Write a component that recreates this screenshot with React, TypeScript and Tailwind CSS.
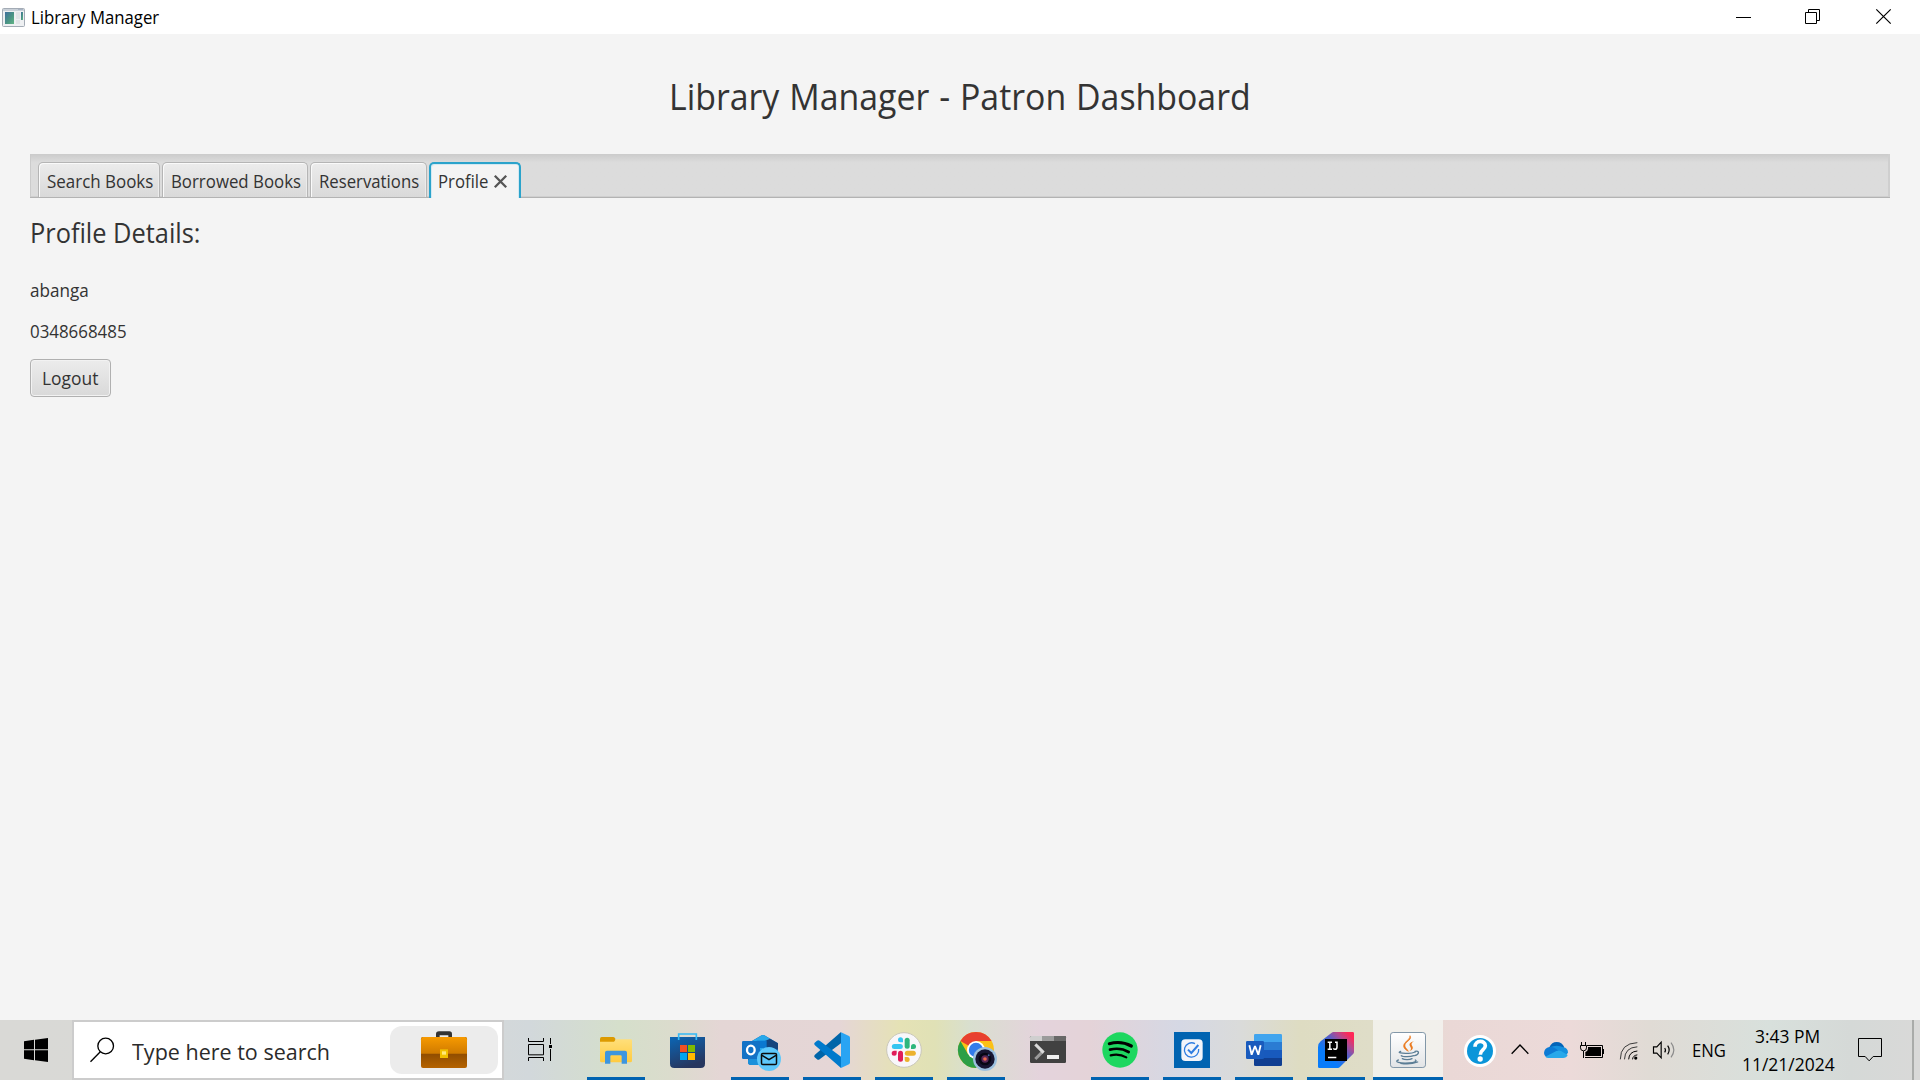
import type { ReactNode } from "react";

function Icon({ box, children, className = "size-9" }: { box: string; children: ReactNode; className?: string }) {
  return (
    <svg viewBox={box} className={`${className} shrink-0 overflow-visible`} fill="none">
      {children}
    </svg>
  );
}

function Label({ children, className }: { children: ReactNode; className: string }) {
  return <span className={`block origin-left whitespace-nowrap ${className}`}>{children}</span>;
}

function TitleBar() {
  return (
    <header className="flex h-[34px] shrink-0 items-center bg-white">
      <Icon box="6 21 69 57" className="ml-[2px] h-[19px] w-[23px]">
        <rect x="7.5" y="22.5" width="66" height="54" rx="3" fill="#eef0f2" stroke="#a3abb5" strokeWidth="3" />
        <path d="M9 24h63v6H9z" fill="#c9d0d8" />
        <path d="M54 24h15v3H54z" fill="#a9b4c4" />
        <rect x="15" y="33" width="27" height="36" fill="url(#appPane)" />
        <path d="M48 33h12v21H48zM48 57h12v12H48z" fill="#e1e4e7" />
        <rect x="63" y="33" width="6" height="24" fill="url(#appPane)" />
        <defs>
          <linearGradient id="appPane" x1="0" y1="0" x2="1" y2="1">
            <stop stopColor="#3f6f9e" />
            <stop offset=".55" stopColor="#4a9484" />
            <stop offset="1" stopColor="#62b585" />
          </linearGradient>
        </defs>
      </Icon>
      <Label className="ml-[6px] scale-x-[.93] text-[18px] leading-[34px] text-black">Library Manager</Label>
      <div className="ml-auto flex h-full">
        <div className="flex w-[69px] items-center justify-center">
          <Icon box="0 0 15 15" className="mb-px size-[15px]">
            <path d="M0 8h15" stroke="#000" shapeRendering="crispEdges" />
          </Icon>
        </div>
        <div className="flex w-[69px] items-center justify-center">
          <Icon box="0 0 15 15" className="mb-px size-[15px]">
            <path d="M.5 3.5h11v11H.5zM3.5 3.5v-3h11v11h-3" stroke="#000" />
          </Icon>
        </div>
        <div className="flex w-[73px] items-center justify-center">
          <Icon box="0 0 15 15" className="mb-px size-[15px]">
            <path d="M.3.3l14.4 14.4M14.7.3L.3 14.7" stroke="#000" strokeWidth="1.2" />
          </Icon>
        </div>
      </div>
    </header>
  );
}

function Tab({ className, scale, children }: { className: string; scale: string; children: ReactNode }) {
  return (
    <div
      className={`h-[35px] rounded-t-[5px] border border-b-0 border-[#b5b5b5] bg-linear-to-b from-[#ececec] to-[#d9d9d9] pl-2 shadow-[inset_1px_1px_0_#fafafa,inset_-1px_0_0_#ececec] ${className}`}
    >
      <Label className={`text-[18px] leading-[37px] ${scale}`}>{children}</Label>
    </div>
  );
}

function TabBar() {
  return (
    <nav className="mx-[30px] flex h-11 items-end gap-[2px] border-b border-[#b3b3b3] bg-[#dcdcdc] bg-linear-to-b from-[#cbcbcb] to-[#dcdcdc] to-20% pl-2 shadow-[inset_1px_0_0_#cbcbcb,inset_-2px_0_0_#cfcfcf,inset_0_-1px_0_#cfcfcf]">
      <Tab className="w-[122px]" scale="scale-x-[.941]">Search Books</Tab>
      <Tab className="w-[146px]" scale="scale-x-[.935]">Borrowed Books</Tab>
      <Tab className="w-[117px]" scale="scale-x-[.93]">Reservations</Tab>
      <div className="-mb-px flex h-9 w-[92px] rounded-t-[5px] border-2 border-b-0 border-[#2ba3cb] bg-[#f4f4f4] pl-[7px] shadow-[inset_1px_1px_0_#d3e9f2,inset_-1px_0_0_#d3e9f2]">
        <Label className="w-[56px] scale-x-[.93] text-[18px] leading-[35px]">Profile</Label>
        <Icon box="0 0 13 13" className="mt-[11px] size-[13px]">
          <path d="M.8.8l11.4 11.4M12.2.8L.8 12.2" stroke="#555" strokeWidth="2.3" />
        </Icon>
      </div>
    </nav>
  );
}

function TaskButton({ children, running = true, active = false }: { children: ReactNode; running?: boolean; active?: boolean }) {
  return (
    <div className={`flex h-full w-[72px] shrink-0 flex-col items-center px-px ${active ? "bg-clip-content bg-[#f3f3f0]/85" : ""}`}>
      <div className="flex h-[57px] items-center pt-[3px]">{children}</div>
      {running && <div className={`h-[3px] bg-[#0063b1] ${active ? "w-full" : "w-[58px]"}`} />}
    </div>
  );
}

function SearchBox() {
  return (
    <div className="flex h-full w-[432px] shrink-0 items-center border-2 border-[#cccccc] bg-white">
      <Icon box="270 84 72 72" className="ml-4 size-6">
        <circle cx="317" cy="108" r="23.5" stroke="#000" strokeWidth="4" />
        <path d="M301 125l-29.500 30" stroke="#000" strokeWidth="4" />
      </Icon>
      <Label className="ml-[18px] scale-x-[.978] pt-[2px] text-[22px] leading-[56px] text-[#2b2b2b]">Type here to search</Label>
      <div className="mr-1 ml-auto flex h-12 w-[108px] items-center justify-center rounded-xl bg-[#ececec]">
        <Icon box="303 63 138 111" className="mb-px h-[37px] w-[46px]">
          <path d="M348 82V72q0-8 9-8h31q8 0 8 8v10h-11v-6h-26v6z" fill="#333" />
          <rect x="303" y="81" width="138" height="93" rx="6" fill="url(#caseLow)" />
          <path d="M303 131V88q0-7 7-7h124q7 0 7 7v43z" fill="url(#caseTop)" />
          <rect x="360" y="118" width="24" height="26" fill="#f2c100" />
          <rect x="366" y="124" width="12" height="10" fill="#ffe97a" />
          <defs>
            <linearGradient id="caseTop" x1="0" y1="0" x2="0" y2="1">
              <stop stopColor="#f79a00" />
              <stop offset="1" stopColor="#cf7a00" />
            </linearGradient>
            <linearGradient id="caseLow" x1="0" y1=".5" x2="0" y2="1">
              <stop stopColor="#8d4b00" />
              <stop offset="1" stopColor="#b56300" />
            </linearGradient>
          </defs>
        </Icon>
      </div>
    </div>
  );
}

function Apps() {
  return (
    <div className="flex h-full">
      <TaskButton>
        <Icon box="834 66 108 108">
          <path d="M840 86q0-5 5-5h35q4 0 6 5v14h-46z" fill="#dc9a00" />
          <path d="M840 95h42l6-7h44q4 0 4 4v60q0 5-5 5h-86q-5 0-5-5z" fill="url(#folder)" />
          <path d="M855 161v-33q0-6 6-6h54q6 0 6 6v33h-16v-22q0-3-3-3h-28q-3 0-3 3v22z" fill="#3d96df" />
          <defs>
            <linearGradient id="folder" x1="0" y1="0" x2="0" y2="1">
              <stop stopColor="#ffdf7a" />
              <stop offset="1" stopColor="#ffcb40" />
            </linearGradient>
          </defs>
        </Icon>
      </TaskButton>
      <TaskButton running={false}>
        <Icon box="90 66 108 108">
          <path d="M90 81h105v80q0 13-13 13h-79q-13 0-13-13z" fill="url(#bag)" />
          <path d="M116 90V72h53v18" stroke="#35b9f5" strokeWidth="5" />
          <path d="M120 105h21v21h-21z" fill="#f25022" />
          <path d="M144 105h21v21h-21z" fill="#7fba00" />
          <path d="M120 129h21v21h-21z" fill="#00a4ef" />
          <path d="M144 129h21v21h-21z" fill="#ffb900" />
          <defs>
            <linearGradient id="bag" x1="0" y1="0" x2=".4" y2="1">
              <stop stopColor="#0b66b5" />
              <stop offset="1" stopColor="#26365f" />
            </linearGradient>
          </defs>
        </Icon>
      </TaskButton>
      <TaskButton>
        <Icon box="306 66 108 108">
          <path d="M324 100l41-24q4-2 8 0l41 24v56q0 9-9 9h-72q-9 0-9-9z" fill="#1066b5" />
          <path d="M328 98l37-22q4-2 8 0l26 16-36 30z" fill="#28a8ea" />
          <path d="M368 96l22-10 24 14v16l-22 14z" fill="#14447d" />
          <path d="M350 92h30v22h-30z" fill="#0a78d0" />
          <path d="M324 150l60-34 20 49h-71q-9 0-9-9z" fill="#1a91db" />
          <rect x="306" y="93" width="54" height="54" rx="4" fill="#1272c6" />
          <ellipse cx="332.500" cy="120" rx="11.500" ry="13" stroke="#fff" strokeWidth="7" />
          <circle cx="387" cy="147" r="36" fill="#5ec8fb" />
          <rect x="364.500" y="130.500" width="45" height="33" rx="4" stroke="#0b0b0b" strokeWidth="4.500" />
          <path d="M366 136l21 13 21-13" stroke="#0b0b0b" strokeWidth="4.500" />
        </Icon>
      </TaskButton>
      <TaskButton>
        <Icon box="522 66 108 108">
          <path d="M603 66L524 135q-3 4 0 7l7 6q4 3 8 0l64-48z" fill="#0065a9" />
          <path d="M603 174L524 105q-3-4 0-7l7-6q4-3 8 0l64 48z" fill="#007acc" />
          <path d="M603 67l24 11q3 2 3 6v73q0 4-3 6l-24 11z" fill="#29a4f3" />
        </Icon>
      </TaskButton>
      <TaskButton>
        <Icon box="738 66 108 108">
          <circle cx="792" cy="120" r="52" fill="#f8f7fa" stroke="#cac7ba" strokeWidth="3" />
          <g strokeWidth="15" strokeLinecap="round">
            <path d="M763 109.500h18" stroke="#36c5f0" />
            <path d="M801.500 91v18" stroke="#2eb67d" />
            <path d="M802 129.500h18" stroke="#ecb22e" />
            <path d="M781.500 130v18" stroke="#e01e5a" />
          </g>
          <path d="M789 97h-7.500a7.500 7.500 0 1 1 7.500-7.500z" fill="#36c5f0" />
          <path d="M813 117v-7.500a7.500 7.500 0 1 1 7.500 7.500z" fill="#2eb67d" />
          <path d="M794 141h7.500a7.500 7.500 0 1 1-7.500 7.500z" fill="#ecb22e" />
          <path d="M770 122v7.500a7.500 7.500 0 1 1-7.500-7.500z" fill="#e01e5a" />
        </Icon>
      </TaskButton>
      <TaskButton>
        <Icon box="-6 66 108 108">
          <circle cx="48" cy="120" r="54" fill="#fbc116" />
          <path d="M48 120L1.200 93A54 54 0 0 1 94.800 93H48z" fill="#e8402f" />
          <path d="M1.200 93A54 54 0 0 0 48 174L71.400 133.500 48 120 24.600 133.500z" fill="#2c9f47" />
          <circle cx="48" cy="120" r="27" fill="#fff" />
          <circle cx="48" cy="120" r="21.500" fill="#327ceb" />
          <circle cx="75" cy="147" r="36" fill="#9cc0de" />
          <circle cx="75" cy="147" r="29" fill="#171632" />
          <circle cx="75" cy="147" r="19" fill="#070714" />
          <circle cx="75" cy="147" r="11" fill="#5a2857" />
          <circle cx="75" cy="147" r="5.500" fill="#ef6a4b" />
          <circle cx="86" cy="136" r="3" fill="#4667a8" />
        </Icon>
      </TaskButton>
      <TaskButton running={false}>
        <Icon box="210 66 108 108">
          <rect x="210" y="78" width="108" height="81" rx="4" fill="#414141" />
          <path d="M210 93V82q0-4 4-4h32v15z" fill="#cfcfcf" />
          <path d="M246 78h36v15h-36z" fill="#9b9b9b" />
          <path d="M282 78h32q4 0 4 4v11h-36z" fill="#686868" />
          <path d="M226 147l22-22" stroke="#999" strokeWidth="9" />
          <path d="M226 103l25 25" stroke="#d9d9d9" strokeWidth="9" />
          <path d="M261 135h36v12h-36z" fill="#efefef" />
        </Icon>
      </TaskButton>
      <TaskButton>
        <Icon box="426 66 108 108">
          <circle cx="480" cy="120" r="53" fill="#1ed760" />
          <g stroke="#000" strokeLinecap="round">
            <path d="M448 101c22-6 46-4 66 7" strokeWidth="9.500" />
            <path d="M450 119c20-5 39-3 56 7" strokeWidth="8" />
            <path d="M452 136c17-4 33-2 47 6" strokeWidth="6.500" />
          </g>
        </Icon>
      </TaskButton>
      <TaskButton>
        <Icon box="642 66 108 108">
          <path d="M642 66h108v108H642z" fill="#0063b1" />
          <rect x="664" y="88" width="64" height="65" rx="12" fill="#f2f5fa" />
          <path d="M716 117a21.500 21.500 0 1 1-11-16" stroke="#2f7de1" strokeWidth="4" />
          <path d="M684 119l10 10 21-24" stroke="#2f7de1" strokeWidth="6" />
        </Icon>
      </TaskButton>
      <TaskButton>
        <Icon box="858 66 108 108">
          <path d="M882 96V76q0-4 4-4h76q4 0 4 4v20z" fill="#41a5ee" />
          <path d="M882 96h84v24h-84z" fill="#2b7cd3" />
          <path d="M882 120h84v24h-84z" fill="#185abd" />
          <path d="M882 144h84v20q0 4-4 4h-76q-4 0-4-4z" fill="#103f91" />
          <rect x="858" y="93" width="54" height="54" rx="4" fill="#195bbd" />
          <path d="M868 106l7 28 10-26 10 26 7-28" stroke="#fff" strokeWidth="5.500" strokeLinejoin="bevel" />
        </Icon>
      </TaskButton>
      <TaskButton>
        <Icon box="114 66 108 108">
          <path d="M155 68q2-2 5-2h58q4 0 4 4v56q0 3-2 5l-41 41q-2 2-5 2h-56q-4 0-4-4v-58q0-12 8-18z" fill="url(#ij)" />
          <path d="M135 87h66v66h-66z" fill="#000" />
          <path d="M143 97h13M149.500 97v21M143 118h13M165 97h6v14q0 7-6 7-3 0-5-3" stroke="#fff" strokeWidth="4.500" />
          <path d="M144 142.500h25" stroke="#fff" strokeWidth="4.500" />
          <defs>
            <linearGradient id="ij" x1="114" y1="174" x2="222" y2="66" gradientUnits="userSpaceOnUse">
              <stop offset=".3" stopColor="#087cfa" />
              <stop offset=".58" stopColor="#5560c8" />
              <stop offset=".75" stopColor="#b6488e" />
              <stop offset=".9" stopColor="#fe2857" />
            </linearGradient>
          </defs>
        </Icon>
      </TaskButton>
      <TaskButton active>
        <Icon box="330 66 108 108">
          <rect x="331.500" y="67.500" width="105" height="105" rx="8" fill="url(#java)" stroke="#8297a8" strokeWidth="3" />
          <path d="M390 77c9 13-19 19-15 32 1 5 8 10 10 15-14-8-18-16-10-26 7-8 15-11 15-21z" fill="#ea7a20" stroke="#ea7a20" strokeWidth="2" />
          <path d="M402 93c-14 5-16 10-11 17 4 6 2 10-4 14 12-5 14-10 9-17-3-5-1-9 6-14z" fill="#ea7a20" />
          <g stroke="#5b7d95" strokeWidth="4" strokeLinecap="round">
            <path d="M362 124c-12 4 2 7 24 6 8 0 15-2 20-4M364 137c5 4 28 4 37 0M367 146c6 4 22 4 29 0M355 150c-14 5 4 11 32 9 16-1 26-5 19-9M362 160c16 3 38 1 51-4" />
            <path d="M405 124c14-4 14 9-1 13" />
          </g>
          <defs>
            <linearGradient id="java" x1="0" y1="0" x2="0" y2="1">
              <stop stopColor="#fff" />
              <stop offset="1" stopColor="#e2e4e6" />
            </linearGradient>
          </defs>
        </Icon>
      </TaskButton>
    </div>
  );
}

function Tray() {
  return (
    <div className="ml-auto flex h-full items-center text-black">
      <Icon box="551 75 96 96" className="mt-[2px] size-8">
        <circle cx="599" cy="123" r="48" fill="#fff" />
        <circle cx="599" cy="123" r="39" fill="#0b95d9" />
        <path d="M584 110c0-21 31-20 31-3 0 12-15 12-15 27" stroke="#fff" strokeWidth="11" />
        <circle cx="599.500" cy="147" r="8" fill="#fff" />
      </Icon>
      <Icon box="693 102 54 30" className="mb-[2px] ml-[15px] h-[10px] w-[18px]">
        <path d="M695 131l25-26 25 26" stroke="#000" strokeWidth="4" />
      </Icon>
      <Icon box="792 96 72 48" className="ml-[15px] h-4 w-6">
        <path d="M808 112q7-16 22-16 16 0 23 16l-20 20z" fill="#0364b8" />
        <path d="M850 112q14 2 14 16l-8 10-48-26q24-10 42 0z" fill="#1490df" />
        <path d="M808 111q9-2 17 4l14 9-40 18q-7-5-7-13 1-15 16-18z" fill="#0d7ad4" />
        <path d="M796 140l33-17q8-3 14 0l20 12q-3 9-14 9h-44q-5 0-9-4z" fill="#28a8ea" />
      </Icon>
      <Icon box="60 93 72 48" className="ml-[12px] h-4 w-6">
        <path d="M81 103.500h46.500v36H75" stroke="#000" strokeWidth="3" />
        <path d="M84 108h39v27H76v-12q7-2 8-9z" fill="#000" />
        <path d="M129 114h3v15h-3z" fill="#000" />
        <path d="M64.500 93v9M76.500 93v9M61.500 103.500h18v7q0 9-9 9t-9-9zM70.500 120v21" stroke="#000" strokeWidth="3" />
      </Icon>
      <Icon box="180 96 56 54" className="mt-[2px] ml-[16px] h-[18px] w-[18px]">
        <path d="M181 149q0-50 53-52M194 149q1-37 40-39" stroke="#333" strokeWidth="3" />
        <path d="M207 149q1-24 27-26M219 149q1-12 15-14" stroke="#000" strokeWidth="3" />
        <circle cx="229" cy="145" r="5" fill="#000" />
      </Icon>
      <Icon box="279 93 66 54" className="ml-[15px] h-[18px] w-[22px]">
        <path d="M280.500 110.500h10l13-14v47l-13-14h-10z" stroke="#000" strokeWidth="3.500" />
        <path d="M314 114q5 6 0 13M323 107q9 13 0 26" stroke="#000" strokeWidth="3.500" />
        <path d="M333 98q17 22 0 44" stroke="#8b8b8b" strokeWidth="3.500" />
      </Icon>
      <Label className="ml-[17px] w-[34px] scale-x-[.925] text-[18px] leading-[60px]">ENG</Label>
      <div className="ml-[16px] flex h-full w-[93px] flex-col items-start pt-[2px]">
        <Label className="ml-[13px] scale-x-[.967] text-[18px] leading-7">3:43 PM</Label>
        <Label className="scale-x-[.97] text-[18px] leading-7">11/21/2024</Label>
      </div>
      <Icon box="894 84 72 72" className="ml-[23px] size-6">
        <path d="M895.500 85.500h69v54h-25l-12 13-12-13h-20z" stroke="#000" strokeWidth="3" />
      </Icon>
      <div className="ml-[30px] h-full w-2 border-l-2 border-[#a9aba9]" />
    </div>
  );
}

function Taskbar() {
  return (
    <footer className="flex h-[60px] shrink-0 bg-[linear-gradient(90deg,#d9d9d6_0px,#d8d9d6_400px,#d2d8db_530px,#d5dfcb_620px,#dbdccd_670px,#e4d6d5_720px,#e5d6d6_840px,#e5e2b5_900px,#e0e1b6_935px,#d9dfcf_970px,#e4d3dc_1040px,#e4d3d8_1090px,#d5d8e4_1180px,#dadbda_1240px,#dedcc2_1300px,#dfddc8_1370px,#ead8d6_1450px,#ecdad9_1570px,#e0dbd5_1650px,#d8e0dc_1770px,#d5d9d7_1850px,#d9d9d8_1920px)]">
      <div className="flex w-[72px] shrink-0 items-center justify-center">
        <Icon box="72 84 72 72" className="size-6">
          <path d="M72 94l30-4.500V118H72zM105 89l39-5v34h-39zM72 121h30v29.500L72 146zM105 121h39v35l-39-5z" fill="#000" />
        </Icon>
      </div>
      <SearchBox />
      <div className="mr-1 flex w-[72px] shrink-0 items-center justify-center">
        <Icon box="624 84 72 69" className="mb-px h-[23px] w-6">
          <path
            d="M625.500 84v10.500h45V84M625.500 103.500h45v31h-45zM625.500 153v-10.500h45V153M691.500 84v18M691.500 117v36"
            stroke="#000"
            strokeWidth="3"
          />
          <path d="M687 105h9v9h-9z" fill="#000" />
        </Icon>
      </div>
      <Apps />
      <Tray />
    </footer>
  );
}

export default function App() {
  return (
    <div className="flex h-screen w-full flex-col overflow-hidden bg-[#f4f4f4] font-['Open_Sans','Noto_Sans',sans-serif] text-[#333333]">
      <TitleBar />
      <main className="flex min-h-0 flex-1 flex-col">
        <div className="flex h-[120px] shrink-0 pt-[3px] pl-[669px]">
          <Label className="scale-x-[.94] text-[36px] leading-[120px] [word-spacing:1.2px]">Library Manager - Patron Dashboard</Label>
        </div>
        <TabBar />
        <section className="flex flex-col items-start px-[30px] pt-[17px]">
          <Label className="scale-x-[.94] text-[27px] leading-9">Profile Details:</Label>
          <Label className="mt-[27px] scale-x-[.95] text-[18px] leading-6">abanga</Label>
          <Label className="mt-[17px] scale-x-[.938] text-[18px] leading-6">0348668485</Label>
          <button className="mt-[16px] h-[38px] w-[81px] rounded-[4px] border border-[#b0b0b0] bg-linear-to-b from-[#ececec] to-[#d9d9d9] pl-[11px] text-left shadow-[inset_0_0_0_1px_#f2f2f2]">
            <Label className="scale-x-[.967] text-[18px] leading-9">Logout</Label>
          </button>
        </section>
      </main>
      <Taskbar />
    </div>
  );
}
